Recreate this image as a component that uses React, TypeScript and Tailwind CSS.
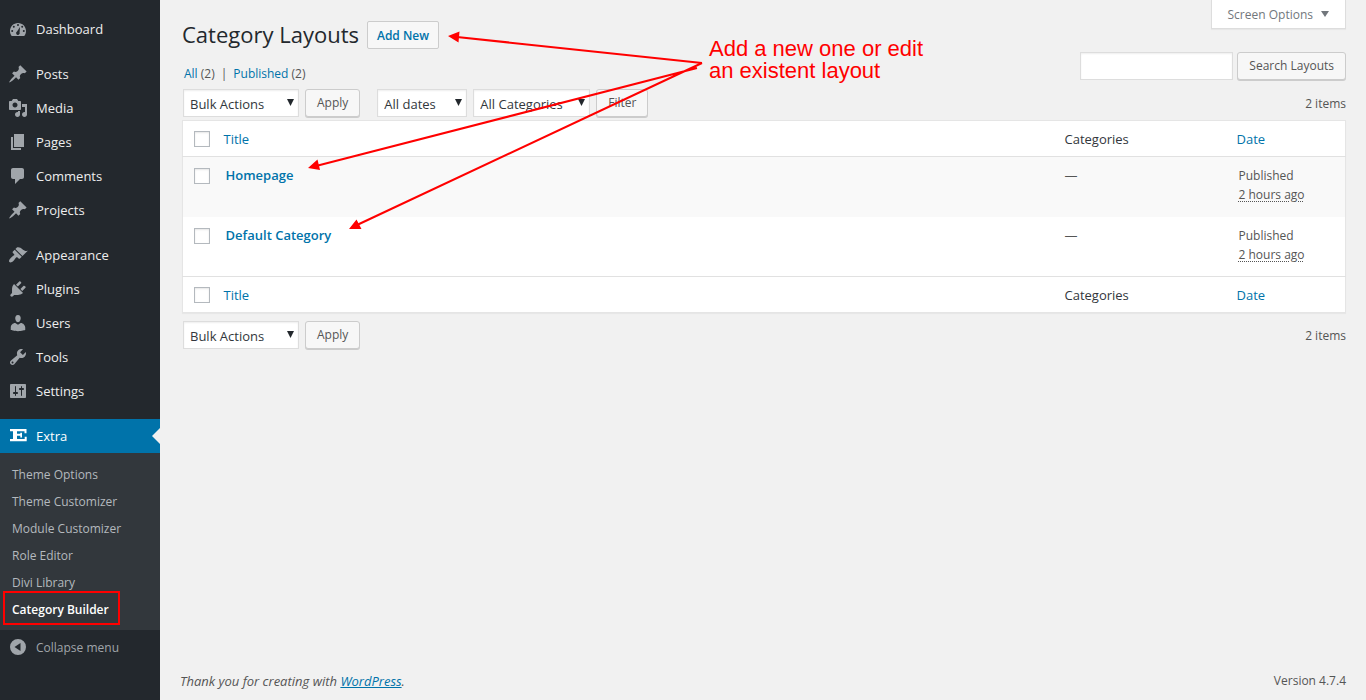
import React from 'react';

const ICONS = {
  dashboard: "M3.76 17h12.48c1.1-1.37 1.76-3.11 1.76-5 0-4.42-3.58-8-8-8s-8 3.58-8 8c0 1.89.66 3.63 1.76 5zM10 5a1 1 0 1 1 0 2 1 1 0 0 1 0-2zM5.8 6.8a1 1 0 1 1 0 2 1 1 0 0 1 0-2zM14.2 6.8a1 1 0 1 1 0 2 1 1 0 0 1 0-2zM4.2 11a1 1 0 1 1 0 2 1 1 0 0 1 0-2zM15.8 11a1 1 0 1 1 0 2 1 1 0 0 1 0-2zM12 8l-.4 5.4a1.8 1.8 0 1 1-2.6-.9z",
  pin: "M10.44 3.02l1.82-1.82 6.36 6.35-1.83 1.82c-1.05-.68-2.48-.57-3.41.36l-.75.75c-.92.93-1.04 2.35-.35 3.41l-1.83 1.82-2.41-2.41-2.8 2.79c-.42.42-3.38 2.71-3.8 2.29s1.86-3.39 2.28-3.81l2.79-2.79L4.1 9.36l1.83-1.82c1.05.69 2.48.57 3.4-.36l.75-.75c.93-.92 1.05-2.35.36-3.41z",
  media: "M13 11V4c0-.55-.45-1-1-1h-1.67L9 1H5L3.67 3H2c-.55 0-1 .45-1 1v7c0 .55.45 1 1 1h10c.55 0 1-.45 1-1zM7 4.5c1.38 0 2.5 1.12 2.5 2.5S8.38 9.5 7 9.5 4.5 8.38 4.5 7 5.62 4.5 7 4.5zM14 6h5v10.5c0 1.38-1.12 2.5-2.5 2.5S14 17.88 14 16.5s1.12-2.5 2.5-2.5c.17 0 .34.02.5.05V9h-3V6zm-4 8.05V13h2v3.5c0 1.38-1.12 2.5-2.5 2.5S7 17.88 7 16.5 8.12 14 9.5 14c.17 0 .34.02.5.05z",
  page: "M6 15V2h10v13H6zm-1 1h8v2H3V5h2v11z",
  comment: "M5 2h9c1.1 0 2 .9 2 2v7c0 1.1-.9 2-2 2h-2l-5 5v-5H5c-1.1 0-2-.9-2-2V4c0-1.1.9-2 2-2z",
  brush: "M14.48 11.06L7.41 3.99l1.5-1.5c.5-.56 2.3-.47 3.51.32 1.21.8 1.43 1.28 2.91 2.1 1.18.64 2.45 1.26 4.45.85zm-.71.71L6.7 4.7 4.93 6.47c-.39.39-.39 1.02 0 1.41l1.06 1.06c.39.39.39 1.03 0 1.42-.6.6-1.43 1.11-2.21 1.69-.35.26-.7.53-1.01.84C1.43 14.23.4 16.08 1.4 17.07c.99 1 2.84-.03 4.18-1.36.31-.31.58-.66.85-1.02.57-.78 1.08-1.61 1.69-2.21.39-.39 1.02-.39 1.41 0l1.06 1.06c.39.39 1.02.39 1.41 0z",
  plug: "M13.11 4.36L9.87 7.6 8 5.73l3.24-3.24c.35-.34 1.05-.2 1.56.32.52.51.66 1.21.31 1.55zm-8 1.77l.91-1.12 9.01 9.01-1.19.84c-.71.71-2.63 1.16-3.82 1.16H6.14L4.9 17.26c-.59.59-1.54.59-2.12 0-.59-.58-.59-1.53 0-2.12l1.24-1.24v-3.88c0-1.13.4-3.19 1.09-3.89zm7.26 3.97l3.24-3.24c.34-.35 1.04-.21 1.55.31.52.51.66 1.21.31 1.55l-3.24 3.25z",
  user: "M10 9.25c-2.27 0-2.73-3.44-2.73-3.44C7 4.02 7.82 2 9.97 2c2.16 0 2.98 2.02 2.71 3.81 0 0-.41 3.44-2.68 3.44zm0 2.57L12.72 10c2.39 0 4.52 2.33 4.52 4.53v2.49s-3.65 1.13-7.24 1.13c-3.65 0-7.24-1.13-7.24-1.13v-2.49c0-2.25 1.94-4.48 4.47-4.48z",
  wrench: "M16.68 9.77c-1.34 1.34-3.3 1.67-4.95.99l-5.41 6.52c-.99.99-2.59.99-3.58 0s-.99-2.59 0-3.57l6.52-5.42c-.68-1.65-.35-3.61.99-4.95 1.28-1.28 3.12-1.62 4.72-1.06l-2.89 2.89 2.82 2.82 2.86-2.87c.53 1.58.18 3.39-1.08 4.65zM3.81 16.21c.4.39 1.04.39 1.43 0 .4-.4.4-1.04 0-1.43-.39-.4-1.03-.4-1.43 0-.39.39-.39 1.03 0 1.43z",
  sliders: "M18 16V4c0-.55-.45-1-1-1H3c-.55 0-1 .45-1 1v12c0 .55.45 1 1 1h14c.55 0 1-.45 1-1zM8 11h1c.55 0 1 .45 1 1s-.45 1-1 1H8v1.5c0 .28-.22.5-.5.5s-.5-.22-.5-.5V13H6c-.55 0-1-.45-1-1s.45-1 1-1h1V5.5c0-.28.22-.5.5-.5s.5.22.5.5V11zm5-2h-1c-.55 0-1-.45-1-1s.45-1 1-1h1V5.5c0-.28.22-.5.5-.5s.5.22.5.5V7h1c.55 0 1 .45 1 1s-.45 1-1 1h-1v5.5c0 .28-.22.5-.5.5s-.5-.22-.5-.5V9z",
  extra: "M2 3h16.500v4.200h-2V5.200H9v2.600h3.300V6.700H14v4.800h-1.700v-1.700H9v3.200h7.700v-2.200h2V15.200H2V13h3V5.200H2z",
  collapse: "M10 2a8 8 0 1 1 0 16 8 8 0 0 1 0-16zM12.5 6L6.5 10l6 4z",
};

type IconName = keyof typeof ICONS;

const MENU: { label: string; icon: IconName }[][] = [
  [{ label: "Dashboard", icon: "dashboard" }],
  [
    { label: "Posts", icon: "pin" },
    { label: "Media", icon: "media" },
    { label: "Pages", icon: "page" },
    { label: "Comments", icon: "comment" },
    { label: "Projects", icon: "pin" },
  ],
  [
    { label: "Appearance", icon: "brush" },
    { label: "Plugins", icon: "plug" },
    { label: "Users", icon: "user" },
    { label: "Tools", icon: "wrench" },
    { label: "Settings", icon: "sliders" },
  ],
];

const SUBMENU = ["Theme Options", "Theme Customizer", "Module Customizer", "Role Editor", "Divi Library"];

const LAYOUTS = ["Homepage", "Default Category"];

const Icon = ({ name }: { name: IconName }) => (
  <svg viewBox="0 0 20 20" className="w-5 h-5 shrink-0" fill="currentColor" fillRule="evenodd" aria-hidden="true">
    <path d={ICONS[name]} />
  </svg>
);

const Sidebar = () => (
  <nav className="w-40 shrink-0 bg-[#23282d] pt-3 text-[13px] text-[#eee]">
    {MENU.map((group, i) => (
      <ul key={i} className="mb-[11px]">
        {group.map((item) => (
          <li key={item.label}>
            <a href="#" className="flex items-center gap-2 h-[34px] px-2">
              <span className="text-[#a0a5aa]"><Icon name={item.icon} /></span>
              <span className="pt-[2px]">{item.label}</span>
            </a>
          </li>
        ))}
      </ul>
    ))}
    <a href="#" className="relative flex items-center gap-2 h-[34px] px-2 bg-[#0073aa] text-white">
      <Icon name="extra" />
      <span className="pt-[2px]">Extra</span>
      <span className="absolute right-0 top-1/2 -translate-y-1/2 border-8 border-transparent border-r-[#f1f1f1]" />
    </a>
    <ul className="bg-[#32373c] pt-2 pb-[7px] text-xs text-[#b4b9be]">
      {SUBMENU.map((label) => (
        <li key={label}>
          <a href="#" className="flex items-center h-[27px] px-3">{label}</a>
        </li>
      ))}
      <li className="relative">
        <a href="#" className="flex items-center h-[27px] px-3 font-semibold text-white">Category Builder</a>
        <span className="absolute left-[3px] -top-[5px] w-[117px] h-[34px] border-2 border-[#f00] pointer-events-none" />
      </li>
    </ul>
    <button className="flex items-center gap-2 h-[34px] px-2 text-xs text-[#a0a5aa]">
      <Icon name="collapse" />
      <span className="pt-[2px]">Collapse menu</span>
    </button>
  </nav>
);

const Select = ({ label, option, width }: { label: string; option: string; width: string }) => (
  <div className={`relative h-7 ${width}`}>
    <select aria-label={label} className="appearance-none w-full h-7 pl-[6px] pt-[3px] border border-[#ddd] bg-white text-[13px] text-[#32373c] shadow-[inset_0_1px_2px_rgba(0,0,0,0.07)]">
      <option>{option}</option>
    </select>
    <svg viewBox="0 0 7 7" className="absolute right-[5px] top-[10px] w-[7px] h-[7px] fill-[#23282d] pointer-events-none" aria-hidden="true">
      <path d="M0 0h7L3.5 7z" />
    </svg>
  </div>
);

const Button = ({ children }: { children: React.ReactNode }) => (
  <button className="h-7 px-[11px] border border-[#ccc] rounded-[3px] bg-[#f7f7f7] text-[#555] text-xs leading-[26px] whitespace-nowrap shadow-[0_1px_0_#ccc]">
    {children}
  </button>
);

const Checkbox = ({ label }: { label: string }) => (
  <input type="checkbox" aria-label={label} className="block appearance-none w-4 h-4 border border-[#b4b9be] bg-white shadow-[inset_0_1px_2px_rgba(0,0,0,0.1)]" />
);

const BulkActions = () => (
  <div className="flex gap-[6px]">
    <Select label="Select bulk action" option="Bulk Actions" width="w-[116px]" />
    <Button>Apply</Button>
  </div>
);

const HeadingRow = () => (
  <tr className="h-9 text-left text-[13px]">
    <th className="pl-[11px]"><Checkbox label="Select all" /></th>
    <th className="pt-[2px] font-normal"><a href="#" className="text-[#0073aa]">Title</a></th>
    <th className="pt-[2px] font-normal text-[#32373c]">Categories</th>
    <th className="pt-[2px] font-normal"><a href="#" className="text-[#0073aa]">Date</a></th>
  </tr>
);

const LayoutsTable = () => (
  <table className="w-full table-fixed border border-[#e5e5e5] bg-white shadow-[0_1px_1px_rgba(0,0,0,0.04)]">
    <colgroup>
      <col className="w-[41px]" />
      <col />
      <col className="w-[172px]" />
      <col className="w-[109px]" />
    </colgroup>
    <thead className="border-b border-[#e1e1e1]"><HeadingRow /></thead>
    <tbody>
      {LAYOUTS.map((name) => (
        <tr key={name} className="h-[60px] align-top odd:bg-[#f9f9f9]">
          <td className="pl-[11px] pt-[11px]"><Checkbox label={`Select ${name}`} /></td>
          <td className="pl-[2px] pt-[9px] text-[13px] leading-[19px] font-semibold"><a href="#" className="text-[#0073aa]">{name}</a></td>
          <td className="pt-[9px] text-[13px] leading-[19px]">—</td>
          <td className="pl-[2px] pt-[9px] leading-[19px]">
            Published<br />
            <abbr title="2 hours ago" className="underline decoration-dotted underline-offset-2">2 hours ago</abbr>
          </td>
        </tr>
      ))}
    </tbody>
    <tfoot className="border-t border-[#e1e1e1]"><HeadingRow /></tfoot>
  </table>
);

// Red callout with arrows to the button and both layouts
const Callout = () => (
  <div className="pointer-events-none text-[#f00]">
    <svg viewBox="300 30 410 205" className="absolute left-[140px] top-[30px] w-[410px] h-[205px]" fill="currentColor" stroke="currentColor" aria-hidden="true">
      <path d="M702 63L457 37M697 68L316 166M702 63L357 225" strokeWidth="2" fill="none" />
      <path stroke="none" d="M448 36l11.500-4.500-1 11zM308 168l9.500-8.500 2.500 10.500zM349 229l7.500-9.500 5 9.500z" />
    </svg>
    <p className="absolute left-[549px] top-[38px] w-[230px] font-['Liberation_Sans',sans-serif] text-[22px] leading-[22px]">
      Add a new one or edit an existent layout
    </p>
  </div>
);

const App: React.FC = () => {
  return (
    <div className="flex min-h-screen bg-[#f1f1f1] font-['Open_Sans',sans-serif] text-xs text-[#555]">
      <Sidebar />
      <main className="relative flex flex-col flex-1 min-w-0 pl-[22px] pr-5">
        <div className="flex justify-between items-start h-[52px]">
          <div className="flex items-start gap-2 pt-[21px]">
            <h1 className="text-[22px] leading-[26px] text-[#23282d]">Category Layouts</h1>
            <a href="#" className="h-7 px-[9px] border border-[#ccc] rounded-[2px] bg-[#f7f7f7] text-xs leading-7 font-semibold text-[#0073aa]">Add New</a>
          </div>
          <button className="flex items-center gap-2 h-[29px] px-4 border border-t-0 border-[#ddd] bg-white text-[#72777c] shadow-[0_1px_1px_rgba(0,0,0,0.04)]">
            <span className="pt-px">Screen Options</span>
            <svg viewBox="0 0 8 6" className="w-2 h-[6px] fill-current" aria-hidden="true"><path d="M0 0h8L4 6z" /></svg>
          </button>
        </div>

        <div className="flex justify-between items-start h-[37px]">
          <ul className="flex gap-[6px] pt-[13px] pl-[2px] leading-[18px]">
            <li><a href="#" className="text-[#0073aa]">All</a> (2)</li>
            <li>|</li>
            <li><a href="#" className="text-[#0073aa]">Published</a> (2)</li>
          </ul>
          <form className="flex gap-1">
            <input type="search" aria-label="Search Layouts" className="w-[153px] h-7 px-1 border border-[#ddd] bg-white shadow-[inset_0_1px_2px_rgba(0,0,0,0.07)]" />
            <Button>Search Layouts</Button>
          </form>
        </div>

        <div className="flex items-center h-[31px] pb-[3px] pl-px">
          <BulkActions />
          <div className="flex gap-[6px] ml-[17px]">
            <Select label="Filter by date" option="All dates" width="w-[90px]" />
            <Select label="Filter by category" option="All Categories" width="w-[117px]" />
            <Button>Filter</Button>
          </div>
          <span className="ml-auto pt-[2px]">2 items</span>
        </div>

        <LayoutsTable />

        <div className="flex items-center justify-between pt-2 pl-px">
          <BulkActions />
          <span className="pt-[2px]">2 items</span>
        </div>

        <footer className="flex justify-between mt-auto pb-[9px] -ml-[2px] leading-5">
          <p className="text-[13px] leading-5 italic">Thank you for creating with <a href="#" className="text-[#0073aa] underline">WordPress</a>.</p>
          <p>Version 4.7.4</p>
        </footer>

        <Callout />
      </main>
    </div>
  );
};

export default App;
